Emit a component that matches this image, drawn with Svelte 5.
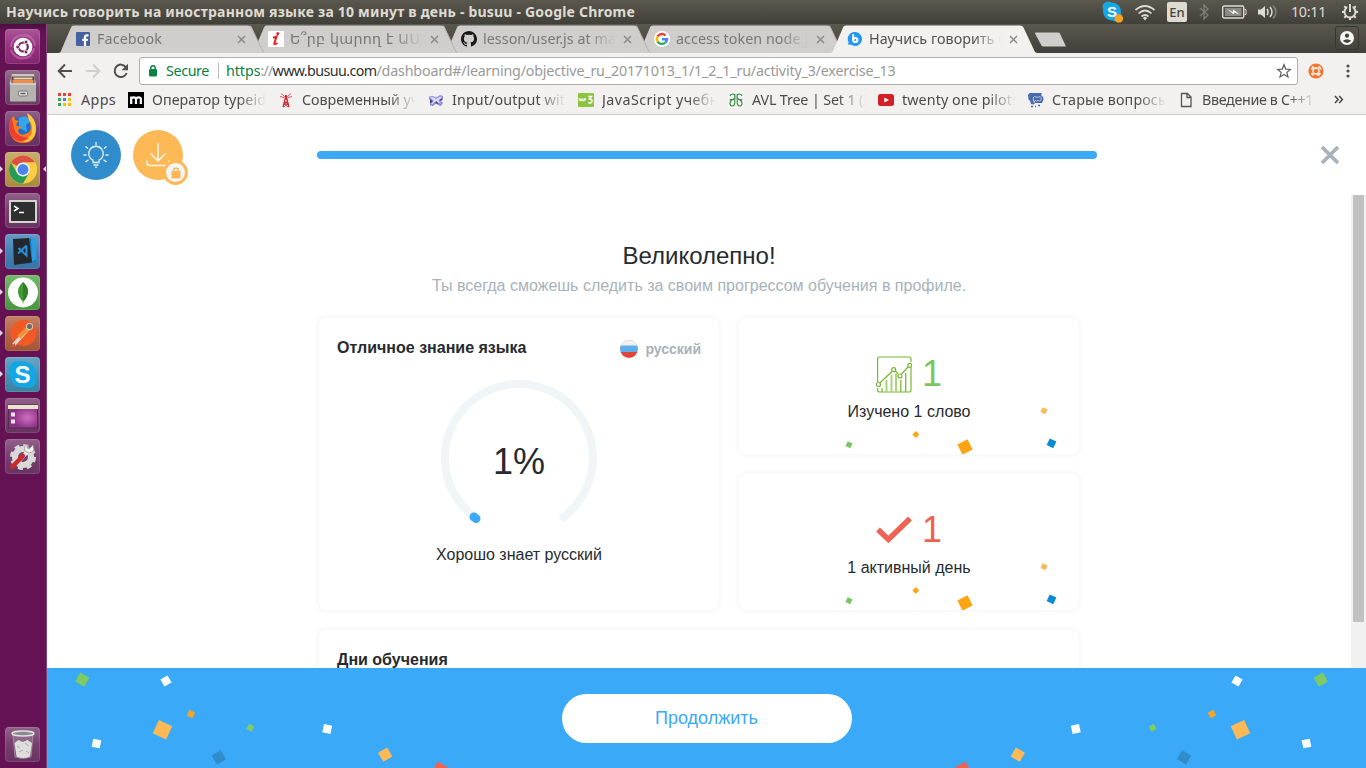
<script>
  function fit(node, width) {
    if (!width) return;
    const natural = node.getBoundingClientRect().width;
    const count = [...node.textContent].length;
    node.style.letterSpacing = `${(width - natural) / count}px`;
  }

  const tabs = [
    { icon: 'facebook', title: 'Facebook', w: 65 },
    { icon: 'info', title: 'Ե՞րբ կարող է ԱՄ', w: 131, armenian: true },
    { icon: 'github', title: 'lesson/user.js at ma', w: 133 },
    { icon: 'google', title: 'access token node j', w: 132 },
    { icon: 'busuu', title: 'Научись говорить н', w: 138, active: true }
  ];

  const bookmarks = [
    { icon: 'm', title: 'Оператор typeid', w: 114 },
    { icon: 'tower', title: 'Современный уч', w: 117 },
    { icon: 'cross', title: 'Input/output wit', w: 113 },
    { icon: 'w3', title: 'JavaScript учебн', w: 117 },
    { icon: 'geeks', title: 'AVL Tree | Set 1 (I', w: 116 },
    { icon: 'youtube', title: 'twenty one pilots', w: 117 },
    { icon: 'php', title: 'Старые вопросы', w: 117 },
    { icon: 'page', title: 'Введение в C++11', w: 119 }
  ];

  const launcher = [
    { name: 'ubuntu', bg: '#942a7d' },
    { name: 'files', bg: '#76466d' },
    { name: 'firefox', bg: '#71386a' },
    { name: 'chrome', bg: '#b79a49', run: true, focus: true },
    { name: 'terminal', bg: '#74396b' },
    { name: 'code', bg: '#3f80b5', run: true },
    { name: 'mongo', bg: '#52a747', run: true },
    { name: 'postman', bg: '#b3603f', run: true },
    { name: 'skype', bg: '#438eb4', run: true },
    { name: 'desktop', bg: '#74396b' },
    { name: 'tools', bg: '#74396b' },
    { name: 'trash', bg: '#74396b', last: true }
  ];

  const appColors = ['#ea4335', '#ea4335', '#ea4335', '#34a853', '#4285f4', '#fbbc05', '#34a853', '#fbbc05', '#fbbc05'];

  // x, y, side, rotation, colour
  const cardBits = [
    [110, 126.8, 5.3, 25, '#79c85f'],
    [176.8, 116.5, 4.8, 45, '#ffa411'],
    [226, 129, 11.4, -27, '#ffa411'],
    [305, 92.8, 5.3, 25, '#feb957'],
    [312.5, 125.3, 7.3, 25, '#058bd1']
  ];
  const footBits = [
    [35.2, 11.7, 10.5, 30, '#7fca63'],
    [119, 13, 8.2, -30, '#fff'],
    [144, 46, 6.3, 27, '#f7a428'],
    [115.5, 61.7, 14.7, 25, '#feb957'],
    [49.5, 75.5, 8.2, 12, '#fff'],
    [171.9, 89.3, 10.5, -30, '#308ccb'],
    [203.3, 59.8, 6, 27, '#7fca63'],
    [280.2, 61, 8.3, 12, '#fff'],
    [338.2, 86.6, 10.5, -30, '#feb957'],
    [393, 102, 12.500, 30, '#ef6352']
  ];
</script>

{#snippet favicon(name)}
  <svg width="16" height="16" viewBox="0 0 16 16">
    {#if name === 'facebook'}
      <rect x="1" y="1" width="14" height="14" rx="1" fill="#4460a0" />
      <path d="M10 15V9M13.500 4.300h-1.500q-2 0-2 2V9M7.300 8.800h5.500" fill="none" stroke="#fff" stroke-width="2.200" />
    {:else if name === 'info'}
      <rect width="16" height="16" fill="#fff" />
      <path d="M5 6.500q2.500-.3 3.500-1L6.300 12.500q-.2 1.500 3.200-.5" fill="none" stroke="#e32222" stroke-width="2" />
      <circle cx="9.800" cy="2.500" r="1.500" fill="#e32222" />
    {:else if name === 'github'}
      <path fill="#191717" d="M8 0C3.6 0 0 3.6 0 8c0 3.5 2.3 6.5 5.500 7.600.4.1.5-.2.5-.4v-1.400c-2.200.5-2.700-1-2.700-1-.4-.9-.9-1.200-.9-1.200-.7-.5.1-.5.1-.5.8.1 1.200.8 1.200.8.7 1.300 1.900.9 2.300.7.1-.5.3-.9.5-1.100-1.800-.2-3.600-.9-3.600-4 0-.9.3-1.600.8-2.100-.1-.2-.4-1 .1-2.100 0 0 .7-.2 2.200.8a7.500 7.500 0 0 1 4 0c1.500-1 2.200-.8 2.200-.8.4 1.100.2 1.900.1 2.100.5.6.8 1.300.8 2.100 0 3.100-1.900 3.700-3.700 3.900.3.3.6.8.6 1.500v2.300c0 .2.1.5.5.4A8 8 0 0 0 8 0z" />
    {:else if name === 'google'}
      <circle cx="8" cy="8" r="8" fill="#fff" />
      <g fill="none" stroke-width="2.400">
        <path d="M3.600 5.400A5.100 5.100 0 0 1 11.600 4.500" stroke="#ea4335" />
        <path d="M3.600 5.400a5.100 5.100 0 0 0 0 5.200" stroke="#fbbc05" />
        <path d="M3.600 10.600a5.100 5.100 0 0 0 7.800.9" stroke="#34a853" />
        <path d="M11.400 11.500A5 5 0 0 0 13.100 8.200H8" stroke="#4285f4" />
      </g>
    {:else if name === 'busuu'}
      <path d="M8 1a7 7 0 1 1-4.300 12.500C2.500 14 1.300 13.600.5 12.800c1-.3 1.200-.8 1.100-1.500A7 7 0 0 1 8 1z" fill="#2196f3" />
      <circle cx="8.300" cy="9" r="2.100" fill="none" stroke="#fff" stroke-width="2" />
      <path d="M6.200 4v5" stroke="#fff" stroke-width="2" stroke-linecap="round" />
    {:else if name === 'm'}
      <rect width="16" height="16" fill="#000" />
      <path d="M3.200 12V4.500M3.200 12V7q.3-1.700 2.500-1.700T8 7v5M8 7q.3-1.700 2.500-1.700T12.800 7v5" fill="none" stroke="#fff" stroke-width="2.200" />
    {:else if name === 'tower'}
      <g fill="none" stroke="#cd2d36">
        <path d="M5 15 7.500 5h1L11 15M6 12l4-3M10 12 6 9M5 15l5-3M11 15l-5-3M7 6l2 2" stroke-width="1.200" />
        <path d="M3 1.500 6.500 4.500M13 1.500 9.500 4.500M2 4.500l4 1M14 4.500l-4 1" stroke-width=".8" />
      </g>
      <circle cx="8" cy="4.500" r="1.400" fill="#cd2d36" />
    {:else if name === 'cross'}
      <path d="M1 4.500 5 4l3 1.500L12 3l3 1v3.500L12.500 9l2.500 2-2 3-2-.5L8 11.500l-3 2.500-3-.5V11l2-2-3-1.500z" fill="#8f8bd9" />
      <path d="M2 5l3.500.3L8 7l4-2.500 2 .5-3.500 3.500 2.500 3-2-.5L8 9l-3.500 3L3 12l2.500-3z" fill="#dad9fb" />
      <path d="M2 7.500l3 1.500-3 2.500zM11 8.500l3-2v2zM7 11l1.500-1.500L10.500 12z" fill="#3c3c66" />
    {:else if name === 'w3'}
      <rect y="1" width="16" height="14" rx="1" fill="#8bc53f" />
      <path d="M1.500 6v1.500q1.400 2 2.800 0V6v1.500q1.400 2 2.800 0V6M10 4.500h3.500L11.500 7q3 .2 2.400 2.600-.8 2-3.900.9" fill="none" stroke="#fff" stroke-width="1.500" />
    {:else if name === 'geeks'}
      <rect width="16" height="16" fill="#f8f8f8" />
      <path d="M2 4Q2.500 2 4.500 2T7 4.500 4.500 7.700H1.500M14 4Q13.500 2 11.500 2T9 4.500 11.500 7.700H14.500M6.800 2v9q-.3 3-2.500 3T2 11.500 4.300 8M9.200 2v9q.3 3 2.500 3t2.300-2.500T11.700 8" fill="none" stroke="#3d9348" stroke-width="1.200" />
    {:else if name === 'youtube'}
      <rect y="2" width="16" height="12" rx="2.500" fill="#d32027" />
      <path d="M6.300 5.500v5L11 8z" fill="#fff" />
    {:else if name === 'php'}
      <path d="M1.500 1h12v3.500h1.500l.5 3-1.500 3.500H7l-1.500 1.500L3 12l-.8-3L.5 7.500 0 3z" fill="#4a6bab" />
      <path d="M5 6q1-2 3-1t4-.5q2 1 1 3.500-1 1.500-3 .5-1.500 1-3 0L6 10.500z" fill="none" stroke="#c9d5ee" stroke-width=".8" />
      <path d="M3 14.500h2m2 0h1m2-1h2" stroke="#4a6bab" stroke-width="1.300" />
    {:else if name === 'page'}
      <path d="M3.500 1.500h6l3.500 3.500v9.500H3.500zM9 1.500V5.500h4" fill="none" stroke="#555" stroke-width="1.300" />
    {/if}
  </svg>
{/snippet}

{#snippet app(name)}
  <svg width="35" height="35" viewBox="0 0 35 35">
    {#if name === 'ubuntu'}
      <path d="M6 18C6 8 18 3 26 8M8 25c7 9 20 3 21-6M9 10C16 3 29 6 30 17M6 21c3 9 14 10 20 6" fill="none" stroke="#c17ab3" stroke-width="2" opacity=".6" />
      <circle cx="18" cy="18" r="9.300" fill="#fff" />
      <circle cx="18.300" cy="18" r="4.500" fill="none" stroke="#772265" stroke-width="2.200" />
      <g fill="#772265" stroke="#fff" stroke-width=".8"><circle cx="12.700" cy="18" r="1.900" /><circle cx="21" cy="13" r="1.900" /><circle cx="21" cy="23" r="1.900" /></g>
    {:else if name === 'files'}
      <path d="M7 4h22l2 10H4.500z" fill="#c9c7c3" /><path d="M6.500 6.500h23V15h-23z" fill="#5c4439" />
      <path d="M7.500 10h21v4h-21z" fill="#e98d54" /><path d="M8.500 7.500h19v2h-19z" fill="#f5d2b0" />
      <rect x="5" y="13.500" width="26" height="18" rx="1" fill="#b5b3af" /><path d="M5 14h26" stroke="#e9e8e5" />
      <rect x="13.500" y="21" width="9" height="5" rx="1.500" fill="#ddd" stroke="#777" /><path d="M15.500 23.500h5" stroke="#555" stroke-width="1.300" />
    {:else if name === 'firefox'}
      <circle cx="18" cy="18" r="12.500" fill="#246dcb" /><path d="M14 7q8-4 12 3l-5 4 1 7-8-4z" fill="#32a6e8" />
      <path d="M4 17Q4 8 9 5l1 4 4 1q-4 3-2 5l5 1-4 3q1 6 7 4 9-2 4-14l-2-6q10 6 9 16-1 13-13 13T4 17z" fill="#ff7a1d" />
      <path d="M22 2q9 5 9 16-1 13-13 13l8-7q3-8-2-15z" fill="#ffc83d" /><path d="M4 17Q4 9 7 8l2 9q2 8 10 9l5 1q-6 5-13 2Q5 26 4 17z" fill="#ef3e32" />
    {:else if name === 'chrome'}
      <circle cx="18" cy="17.500" r="14" fill="#f9c83c" />
      <path d="M18 17.500 5.900 10.500A14 14 0 0 1 30.100 10.500H18z" fill="#dc5144" />
      <path d="M18 10.500H30.100A14 14 0 0 1 18 31.500L24.100 21z" fill="#fccd44" />
      <path d="M5.900 10.500A14 14 0 0 0 18 31.500L24.100 21 12 21z" fill="#249c57" />
      <circle cx="18" cy="17.500" r="7" fill="#edf0ed" /><circle cx="18" cy="17.500" r="5.400" fill="#4a85ed" />
    {:else if name === 'terminal'}
      <rect x="4" y="7" width="28" height="23" rx="1" fill="#d5d5d0" /><rect x="6" y="9" width="24" height="19" fill="#2d302f" />
      <path d="M9 13l4 2.500-4 2.500M14 19.500h5" fill="none" stroke="#fff" stroke-width="1.500" />
    {:else if name === 'code'}
      <path d="M19 5l9-1 3 23-10 4z" fill="#1677bd" /><path d="M26 3.500l4 1 1.500 21-4.500 2z" fill="#2c9be6" />
      <path d="M8 5l16-1 3 24.500-18 2.500z" fill="#24272c" /><path d="M21.500 11.500v10l-8-7.500M21.500 11.500l-8.500 8" fill="none" stroke="#2791d5" stroke-width="2" />
    {:else if name === 'mongo'}
      <circle cx="18" cy="17.500" r="15" fill="#fff" /><path d="M18 7q10 9 0 20-10-11 0-20z" fill="#439934" /><path d="M18 7q10 9 0 20z" fill="#347e2b" /><path d="M18 25v3.500" stroke="#94b289" />
    {:else if name === 'postman'}
      <circle cx="18.500" cy="17" r="13" fill="#f15a24" /><path d="M8.500 29 23 13" stroke="#ded5cc" stroke-width="3.500" /><path d="M14 21l8-8" stroke="#f29132" stroke-width="4" />
      <circle cx="24.500" cy="10.500" r="3.200" fill="#706b69" stroke="#dedede" /><path d="M5 31l5-4v4" fill="#db5135" />
    {:else if name === 'skype'}
      <circle cx="12.500" cy="12" r="8" fill="#12a7e4" /><circle cx="23.500" cy="23" r="8" fill="#12a7e4" /><circle cx="18" cy="17.500" r="13" fill="#12a7e4" />
      <text x="17.500" y="26" text-anchor="middle" font-size="24" font-weight="700" fill="#fff" font-family="Liberation Sans, sans-serif">S</text>
    {:else if name === 'desktop'}
      <rect x="3.500" y="7" width="29" height="23" fill="url(#desk)" stroke="#4e3048" /><rect x="3" y="7" width="30" height="4" fill="#e7e4cd" />
      <rect x="6" y="14.500" width="4" height="4" fill="#eee6ef" /><rect x="6" y="21.500" width="4" height="4" fill="#eee6ef" />
    {:else if name === 'tools'}
      <circle cx="18" cy="18" r="8" fill="none" stroke="#d9d9d7" stroke-width="6" /><circle cx="18" cy="18" r="11.500" fill="none" stroke="#d9d9d7" stroke-width="3" stroke-dasharray="5 4.030" />
      <path d="M13 23 24 11" stroke="#eee" stroke-width="4" /><path d="M28 6l-4 4-2-1 1-4q-5 2-3 7 5 4 9-1z" fill="#f2f2f0" stroke="#8e8e8b" stroke-width=".7" /><path d="M7 28 18 17" stroke="#c92b2b" stroke-width="4.500" stroke-linecap="round" />
    {:else if name === 'trash'}
      <path d="M8 7h20l-2 23q-8 3-16 0z" fill="#9f8d99" opacity=".45" stroke="#d7d3d3" />
      <ellipse cx="18" cy="6.500" rx="11" ry="2.500" fill="#8d8a8c" stroke="#e1e1df" stroke-width="1.500" />
      <path d="M9.500 16l4-3 4 2 5-2 4.500 3-2 13.500q-6.500 3-13.500 0z" fill="#dededb" /><path d="M12 19l3 2M20 16l4 3M14 25l4-2M21 24l3 2" fill="none" stroke="#aaa" stroke-width="1" />
    {/if}
  </svg>
{/snippet}

{#snippet bits(list)}
  {#each list as [x, y, s, r, c]}
    <rect x={x - s / 2} y={y - s / 2} width={s} height={s} fill={c} transform={`rotate(${r} ${x} ${y})`} />
  {/each}
{/snippet}

<div class="screen">
  <svg class="defs" width="0" height="0"><defs><radialGradient id="desk" cx=".65" cy=".55"><stop offset="0" stop-color="#cd71bc" /><stop offset="1" stop-color="#8c2f86" /></radialGradient></defs></svg>
  <div class="panel">
    <span class="wintitle" use:fit={629}>Научись говорить на иностранном языке за 10 минут в день - busuu - Google Chrome</span>
    <div class="tray">
      <svg width="24" height="24" viewBox="0 0 24 24"><circle cx="7" cy="7" r="5.500" fill="#16a8e4" /><circle cx="15" cy="16" r="5.500" fill="#16a8e4" /><circle cx="11" cy="11.500" r="9" fill="#16a8e4" /><text x="11" y="17" text-anchor="middle" font-size="15" font-weight="700" fill="#fff" font-family="Liberation Sans, sans-serif">S</text><circle cx="17.800" cy="18.500" r="4.300" fill="#f7a11e" /></svg>
      <svg width="22" height="20" viewBox="0 0 22 20"><g fill="none" stroke="#dfdbd2" stroke-width="1.700"><path d="M1.500 8Q11 0 20.500 8M4.500 11.500q6.500-6 13 0M7.500 14.500q3.500-3 7 0" /></g><path d="M8.800 16l2.200-1.500 2.200 1.500L11 18.500z" fill="#dfdbd2" /></svg>
      <span class="lang">En</span>
      <svg width="12" height="18" viewBox="0 0 12 18"><path d="M2 5l8 7-4 4V2l4 4-8 7" fill="none" stroke="#82807a" stroke-width="1.300" /></svg>
      <svg width="25" height="14" viewBox="0 0 25 14"><rect x=".7" y="1" width="21" height="12" rx="1.500" fill="none" stroke="#dfdbd2" stroke-width="1.400" /><rect x="3" y="3" width="16.500" height="8" fill="#8b8983" /><path d="M22.500 4.500H24v5h-1.500" fill="none" stroke="#dfdbd2" /><path d="M5 4l6 3V4.500l7 5-6-2v2z" fill="#fff" /></svg>
      <svg width="20" height="16" viewBox="0 0 20 16"><path d="M0 5.500h3l4-3.500v12l-4-3.500H0z" fill="#dfdbd2" /><g fill="none" stroke="#dfdbd2" stroke-width="1.500"><path d="M9 5q2 3 0 6M12 3q4 5 0 10" /><path d="M15 1.500q6 6.500 0 13" stroke="#85837c" /></g></svg>
      <span class="clock" use:fit={35}>10:11</span>
      <svg width="18" height="18" viewBox="0 0 18 18"><circle cx="9" cy="9" r="5.500" fill="none" stroke="#dfdbd2" stroke-width="2" /><g stroke="#dfdbd2" stroke-width="2"><path d="M1 9h3M14 9h3M9 14v3M3.300 3.300l2 2M14.700 3.300l-2 2M3.300 14.700l2-2M14.700 14.700l-2-2" /></g><path d="M9 1v9" stroke="#45433d" stroke-width="5" /><path d="M9 1v8" stroke="#dfdbd2" stroke-width="2" /></svg>
    </div>
  </div>

  <div class="desktop">
    <nav class="launcher">
      {#each launcher as item}
        <div class="tile" class:last={item.last} style:background-color={item.bg}>
          {@render app(item.name)}
          {#if item.run}<i class="run"></i>{/if}
          {#if item.focus}<i class="focus"></i>{/if}
        </div>
      {/each}
    </nav>

    <section class="browser">
      <div class="tabs">
        {#each tabs as tab, i}
          <div class="tab" class:active={tab.active} style:z-index={tab.active ? 9 : 5 - i}>
            <svg class="shape" width="206" height="28" viewBox="0 0 206 28"><path d="M0 28 1.500 27 12 2.500Q12.500 .5 15 .5H189Q191.500.5 192.500 2.500L204 27 206 28z" /><path class="edge" d="M191.500 .5 204.500 27.500" /></svg>
            {@render favicon(tab.icon)}
            <div class="label"><span class:armenian={tab.armenian} use:fit={tab.w}>{tab.title}</span></div>
            <svg class="x" width="9" height="9" viewBox="0 0 9 9"><path d="M1 1l7 7M8 1 1 8" /></svg>
          </div>
        {/each}
        <svg class="newtab" width="33" height="16" viewBox="0 0 33 16"><path d="M1.500.5H24Q25.500.5 26 1.500L32 14.500H9.500Q8 14.500 7.500 13.500L1 1.500z" fill="#d0cecd" /></svg>
        <div class="person"><svg width="14" height="14" viewBox="0 0 14 14"><circle cx="7" cy="7" r="7" fill="#f6f5f3" /><circle cx="7" cy="4.700" r="2.100" fill="#45433d" /><path d="M2.800 9.800Q7 6.500 11.200 9.800 7 14 2.800 9.800z" fill="#45433d" /></svg></div>
      </div>

      <div class="toolbar">
        <svg width="16" height="16" viewBox="0 0 16 16"><path d="M15 8H2M8 1.500 1.700 8 8 14.500" fill="none" stroke="#505050" stroke-width="2" /></svg>
        <svg width="16" height="16" viewBox="0 0 16 16"><path d="M1 8h13M8 1.500 14.300 8 8 14.500" fill="none" stroke="#d0cfce" stroke-width="2" /></svg>
        <svg width="16" height="16" viewBox="0 0 16 16"><path d="M13.700 10A6.200 6.200 0 1 1 13 4.300" fill="none" stroke="#505050" stroke-width="2" /><path d="M15 .8v6.400H8.600z" fill="#505050" /></svg>
        <div class="omnibox">
          <svg class="lock" width="10" height="12" viewBox="0 0 10 12"><rect x="1.500" y="4.500" width="7" height="6.500" rx=".5" fill="#0b8043" stroke="#0b8043" /><path d="M2.800 4V3a2.200 2.200 0 0 1 4.400 0v1" fill="none" stroke="#0b8043" stroke-width="1.400" /></svg>
          <span class="secure" use:fit={43}>Secure</span>
          <i class="bar"></i>
          <div class="url"><span class="green" use:fit={34.5}>https</span><span use:fit={12}>://</span><span class="dark" use:fit={104}>www.busuu.com</span><span use:fit={519}>/dashboard#/learning/objective_ru_20171013_1/1_2_1_ru/activity_3/exercise_13</span></div>
          <svg class="star" width="16" height="16" viewBox="0 0 16 16"><path d="M8 1.700 9.800 6.100l4.600.3-3.600 3 1.200 4.500L8 11.400l-4 2.500 1.200-4.500-3.600-3 4.600-.3z" fill="none" stroke="#5d5d5d" stroke-width="1.200" /></svg>
        </div>
        <svg class="ext" width="16" height="16" viewBox="0 0 16 16"><circle cx="8" cy="8" r="7.600" fill="#f4742c" /><circle cx="8" cy="8" r="3" fill="none" stroke="#fff" stroke-width="1.300" /><path d="M3.500 6.500Q4 4 6 3.500M10.500 3.500q2 1 2.300 3M12.500 10q-1 2-3 2.700M5.500 12.300Q4 11.500 3.400 10" fill="none" stroke="#fff" stroke-width="1.500" /></svg>
        <svg class="dots" width="4" height="14" viewBox="0 0 4 14"><g fill="#505050"><circle cx="2" cy="2" r="1.600" /><circle cx="2" cy="7" r="1.600" /><circle cx="2" cy="12" r="1.600" /></g></svg>
      </div>

      <div class="bookmarks">
        <div class="apps">{#each appColors as c}<i style:background={c}></i>{/each}</div>
        <div class="appslabel"><span use:fit={35}>Apps</span></div>
        {#each bookmarks as b}
          <div class="bookmark">{@render favicon(b.icon)}<div class="label"><span use:fit={b.w}>{b.title}</span></div></div>
        {/each}
        <svg class="more" width="10" height="9" viewBox="0 0 10 9"><path d="M1 1l3.200 3.500L1 8M5.200 1l3.200 3.500L5.200 8" fill="none" stroke="#444" stroke-width="1.500" /></svg>
      </div>

      <main>
        <header>
          <div class="round blue"><svg width="30" height="30" viewBox="0 0 30 30" fill="none" stroke="#e6f2fb" stroke-width="1.300"><path d="M12 22.500v-2.300a7.300 7.300 0 1 1 6 0v2.300zM12.500 25h5M14 27.200h2M15 2v3M2.500 15h3M24.500 15h3M4.500 6.500l2.500 2M25.500 6.500l-2.500 2M4.500 22l3-2.300M25.500 22l-3-2.300" /></svg></div>
          <div class="round orange"><svg width="26" height="26" viewBox="0 0 26 26" fill="none" stroke="#fff6e8" stroke-width="1.500"><path d="M13 1v17.500M5.500 11.500l7.500 7.500 7.500-7.500M2 18.500v2.500q0 2.500 3 2.500h16q3 0 3-2.500v-2.500" /></svg>
            <span class="badge"><svg width="10" height="12" viewBox="0 0 10 12"><rect x=".5" y="4" width="9" height="7.500" rx="1" fill="#feb652" /><path d="M2.500 5V3.500Q2.500 1.200 5 1.200t2.500 2.300V5" fill="none" stroke="#feb652" stroke-width="1.400" /></svg></span>
          </div>
          <div class="progress"></div>
          <svg class="close" width="20" height="20" viewBox="0 0 20 20"><path d="M2 2l16 16M18 2 2 18" stroke="#a8b2bb" stroke-width="3.800" /></svg>
        </header>

        <div class="scroll">
          <div class="content">
            <h1>Великолепно!</h1>
            <p class="sub">Ты всегда сможешь следить за своим прогрессом обучения в профиле.</p>
            <div class="grid">
              <article class="card fluency">
                <div class="cardhead"><h2>Отличное знание языка</h2>
                  <div class="language"><svg width="18" height="18" viewBox="0 0 18 18"><clipPath id="round"><circle cx="9" cy="9" r="9" /></clipPath><g clip-path="url(#round)"><rect width="18" height="6" fill="#f4f0f0" /><rect y="5.500" width="18" height="6.800" fill="#5eaeeb" /><rect y="12" width="18" height="6" fill="#e04637" /><path d="M1 5A9 9 0 0 1 17 5" fill="none" stroke="#eeb8b2" stroke-width=".8" /></g></svg><b>русский</b></div>
                </div>
                <div class="gauge">
                  <svg width="160" height="160" viewBox="0 0 160 160" fill="none" stroke-width="8" stroke-linecap="round"><path d="M36 139.500A74 74 0 1 1 124.500 139" stroke="#f1f5f8" /><path d="M37 140.500 35 139" stroke="#39a9f8" stroke-width="9" /></svg>
                  <strong>1%</strong>
                </div>
                <p>Хорошо знает русский</p>
              </article>
              <div class="stats">
                <article class="card stat">
                  <svg class="confetti" width="340" height="136">{@render bits(cardBits)}</svg>
                  <div class="num green1"><svg width="36" height="37" viewBox="0 0 36 37" fill="none" stroke="#78b833" stroke-width="1.200"><path d="M1.600 26V3q0-2 2-2H33q2 0 2 2v3M35 11.500V34q0 2-2 2H3.600q-2 0-2-2v-2M3.800 27 16 15.500M19.300 15 22 18M25.500 18 32.500 10.500" /><circle cx="2.500" cy="28.500" r="2" /><circle cx="17.700" cy="13.700" r="2" /><circle cx="24" cy="20" r="2" /><circle cx="33.800" cy="9.300" r="2" /><path d="M6 32v4M24.800 24v12M29.700 17v19" stroke-width="1.300" /><path d="M10.500 24v12M15.500 19v17M20 18v18" stroke="#a8d478" stroke-width="2" /></svg><span>1</span></div>
                  <p>Изучено 1 слово</p>
                </article>
                <article class="card stat">
                  <svg class="confetti" width="340" height="136">{@render bits(cardBits)}</svg>
                  <div class="num red1"><svg width="36" height="37" viewBox="0 0 36 37" fill="none"><path d="M2 17.500 12.400 27.500 34 6.500" stroke="#ef6352" stroke-width="5.500" /></svg><span>1</span></div>
                  <p>1 активный день</p>
                </article>
              </div>
              <article class="card days"><h2>Дни обучения</h2></article>
            </div>
          </div>
          <div class="scrollbar"><i></i></div>
        </div>

        <footer>
          <svg class="confetti" width="1319" height="100" viewBox="0 0 1319 100">{@render bits(footBits)}<g transform="translate(1309 0) scale(-1 1)">{@render bits(footBits)}</g></svg>
          <button>Продолжить</button>
        </footer>
      </main>
    </section>
  </div>
</div>

<style>
  :global(body) { overflow: hidden; }
  .screen { width: 1366px; height: 768px; display: flex; flex-direction: column; overflow: hidden; font: 14.300px 'Noto Sans', 'DejaVu Sans', sans-serif; color: #4b4b4b; }
  .screen svg { display: block; flex: none; }
  .defs { position: absolute; }
  span { white-space: pre; }
  .panel { height: 24px; flex: none; display: flex; align-items: center; justify-content: space-between; padding: 0 7px 0 6px; background: linear-gradient(#5b584e, #403f39); color: #dfdbd2; }
  .wintitle { font-weight: 700; font-size: 14px; line-height: 24px; }
  .tray { display: flex; align-items: center; }
  .tray > :nth-child(2) { margin-left: 9px; }
  .lang { margin: 0 11px 0 11px; width: 20px; height: 20px; border-radius: 2px; background: #dfdbd2; color: #45433d; text-align: center; line-height: 20px; font-size: 13px; font-weight: 500; }
  .tray > :nth-child(5) { margin-left: 12px; }
  .tray > :nth-child(6) { margin-left: 11px; }
  .clock { margin: 0 15px 0 13px; line-height: 24px; }
  .desktop { flex: 1; min-height: 0; display: flex; }
  .launcher { box-sizing: border-box; width: 47px; flex: none; display: flex; flex-direction: column; gap: 6px; padding: 5px 5px 6px; background: linear-gradient(#500d43, #651254 8px); border-right: 1px solid #864677; }
  .tile { position: relative; width: 35px; height: 35px; border-radius: 4px; background-image: linear-gradient(#ffffff35, #ffffff08 50%, #0000001a); box-shadow: inset 0 0 0 1px #ffffff20; }
  .last { margin-top: auto; }
  .run, .focus { position: absolute; top: 14px; border: 3.500px solid transparent; }
  .run { left: -5px; border-left-color: #dcd6db; border-right: 0; }
  .focus { right: -6px; border-right-color: #dcd6db; border-left: 0; }
  .browser { flex: 1; min-width: 0; display: flex; flex-direction: column; background: #f2f1f0; }
  .tabs { height: 29px; flex: none; display: flex; align-items: flex-end; padding-left: 12px; background: linear-gradient(#5b584e, #403f39); isolation: isolate; }
  .tab { box-sizing: border-box; position: relative; width: 206px; height: 28px; margin-right: -13px; display: flex; align-items: center; padding: 0 19px 0 16px; color: #777; flex: none; }
  .shape { position: absolute; left: 0; top: 0; z-index: -1; fill: #d0cecd; }
  .edge { stroke: #b4b2b0; }
  .active .shape { fill: #f2f1f0; }
  .active .edge { stroke: none; }
  .active { color: #505050; }
  .tab .label { width: 132px; margin-left: 6px; }
  .label { overflow: hidden; display: flex; line-height: 20px; mask-image: linear-gradient(90deg, #000 calc(100% - 28px), transparent); }
  .armenian { font-family: 'DejaVu Sans', sans-serif; }
  .x { margin-left: auto; fill: none; stroke: #8b8a89; stroke-width: 1.500; }
  .newtab { margin: 0 0 5px 10px; }
  .person { margin: 0 7px 3px auto; width: 22px; height: 22px; border: 1px solid #38362f; border-radius: 3px; display: grid; place-items: center; }
  .toolbar { height: 35px; flex: none; display: flex; align-items: center; padding-left: 10px; gap: 12px; border-top: 0; }
  .omnibox { box-sizing: border-box; height: 28px; width: 1159px; margin: 1px 0 0 -2px; border: 1px solid #afaead; border-radius: 3px; background: #fff; display: flex; align-items: center; padding-left: 8px; line-height: 24px; }
  .secure { margin-left: 8px; color: #0b8043; }
  .bar { width: 1px; height: 16px; background: #bbb; margin: 0 7px 0 9px; }
  .url { display: flex; color: #999; }
  .green { color: #0b8043; }
  .dark { color: #303030; }
  .star { margin: 0 5px 0 auto; }
  .ext { margin-left: -2px; }
  .dots { margin-left: 10px; }
  .bookmarks { box-sizing: border-box; height: 27px; flex: none; display: flex; align-items: center; padding: 0 0 3px 11px; border-bottom: 1px solid #cfcdcc; }
  .apps { display: grid; grid-template-columns: repeat(3, 3px); gap: 2px; }
  .apps i { width: 3px; height: 3px; }
  .appslabel { width: 47px; margin-left: 10px; display: flex; line-height: 20px; }
  .bookmark { display: flex; align-items: center; width: 150px; flex: none; }
  .bookmark .label { width: 114px; margin-left: 8px; }
  .more { margin-left: 6px; }
  main { height: 653px; display: flex; flex-direction: column; background: #fff; font-family: 'Liberation Sans', Arial, sans-serif; color: #252b2f; }
  header { box-sizing: border-box; height: 80px; flex: none; display: flex; align-items: center; padding: 0 26px 0 24px; }
  .round { position: relative; width: 50px; height: 50px; border-radius: 50%; display: grid; place-items: center; }
  .blue { background: #308ccb; }
  .orange { background: #feb957; margin-left: 12px; }
  .badge { position: absolute; left: 30px; top: 30px; box-sizing: border-box; width: 25px; height: 25px; border: 3px solid #feb957; border-radius: 50%; background: #f1f5f8; display: grid; place-items: center; }
  .progress { width: 780px; height: 8px; margin-left: 134px; border-radius: 4px; background: #39a9f8; }
  .close { margin-left: auto; }
  .scroll { height: 473px; flex: none; display: flex; overflow: hidden; }
  .content { flex: 1; display: flex; flex-direction: column; align-items: center; padding-top: 46px; }
  h1 { margin: 0; font-size: 24px; line-height: 30px; font-weight: 400; }
  p { margin: 0; font-size: 16px; line-height: 24px; text-align: center; }
  .sub { color: #a8b2bb; margin-top: 3px; }
  .grid { width: 760px; margin-top: 20px; display: grid; grid-template-columns: 400px 340px; grid-template-rows: 292px 100px; gap: 20px; }
  .card { border-radius: 8px; background: #fff; box-shadow: 0 0 6px rgba(45, 75, 100, .08); }
  h2 { margin: 0; font-size: 16px; line-height: 24px; font-weight: 700; }
  .fluency { padding: 18px 18px 0; }
  .fluency { box-sizing: border-box; }
  .cardhead, .language { display: flex; align-items: center; justify-content: space-between; }
  .language { gap: 7px; font-size: 14px; color: #a8b2bb; padding-top: 2px; }
  .gauge { display: grid; place-items: center; margin-top: 18px; }
  .gauge > * { grid-area: 1 / 1; }
  .gauge strong { font-size: 36px; font-weight: 400; padding-top: 7px; }
  .fluency p { margin-top: 5px; }
  .stats { display: grid; grid-template-rows: 136px 136px; gap: 20px; }
  .stat { position: relative; display: flex; flex-direction: column; align-items: center; padding-top: 36px; box-sizing: border-box; overflow: hidden; }
  .confetti { position: absolute; left: 0; top: 0; }
  .num { display: flex; align-items: center; gap: 10px; height: 40px; font-size: 36px; }
  .green1 { color: #79c85f; }
  .red1 { color: #ef6352; }
  .stat p { margin-top: 6px; }
  .days { grid-column: 1 / 3; padding: 18px; }
  .scrollbar { width: 15px; background: #f1f1f1; }
  .scrollbar i { display: block; width: 11px; height: 427px; margin: 0 auto; background: #c1c1c1; }
  footer { position: relative; height: 100px; flex: none; background: #39a9f8; display: flex; justify-content: center; align-items: center; overflow: hidden; }
  button { position: relative; width: 290px; height: 49px; margin: 0; border: 0; border-radius: 25px; background: #fff; color: #39a9f8; font: 18px 'Liberation Sans', Arial, sans-serif; }
</style>
